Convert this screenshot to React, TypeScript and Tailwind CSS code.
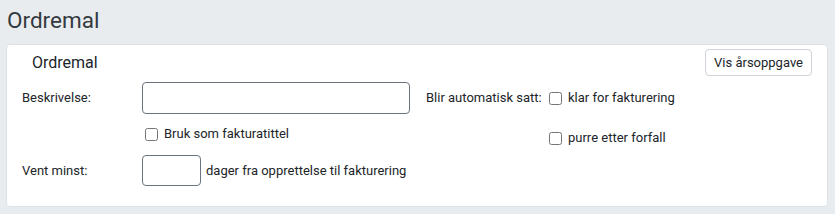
import React from "react";

function Check({ label }: { label: string }) {
  return (
    <label className="flex items-center gap-[6px] h-[20px]">
      <input type="checkbox" className="w-[13px] h-[13px] m-0" />
      <span>{label}</span>
    </label>
  );
}

export default function App() {
  return (
    <div
      className="w-[835px] h-[214px] bg-[#e9ecef] pl-[6px] pr-[7px] text-[13px] text-[#212529]"
      style={{ fontFamily: "Roboto, 'Liberation Sans', sans-serif" }}
    >
      <h1 className="h-[44px] pt-[5px] pl-[1px] text-[22.5px] leading-[30px] text-[#343a40]">Ordremal</h1>

      <div className="h-[163px] bg-white border border-[#dee2e6] rounded-[4px] px-[15px]">
        <div className="flex items-center justify-between pt-[4px]">
          <div className="pl-[10px] text-[16px] leading-[27px]">Ordremal</div>
          <button
            type="button"
            className="h-[27px] px-[8px] border border-[#ced4da] rounded-[4px] bg-white text-[13px]"
          >
            Vis årsoppgave
          </button>
        </div>

        <div className="flex mt-[6px]">
          <div className="w-[388px]">
            <div className="flex items-center">
              <span className="w-[120px]">Beskrivelse:</span>
              <input
                type="text"
                className="w-[268px] h-[32px] border border-[#6c757d] rounded-[4px] px-2"
              />
            </div>
            <div className="pl-[123px] mt-[10px]">
              <Check label="Bruk som fakturatittel" />
            </div>
            <div className="flex items-center mt-[11px]">
              <span className="w-[120px]">Vent minst:</span>
              <input
                type="text"
                className="w-[59px] h-[31px] border border-[#6c757d] rounded-[4px] px-2"
              />
              <span className="ml-[5px]">dager fra opprettelse til fakturering</span>
            </div>
          </div>

          <div className="flex ml-[16px] pt-[6px]">
            <span className="w-[123px] leading-[20px]">Blir automatisk satt:</span>
            <div className="flex flex-col gap-[20px]">
              <Check label="klar for fakturering" />
              <Check label="purre etter forfall" />
            </div>
          </div>
        </div>
      </div>
    </div>
  );
}
